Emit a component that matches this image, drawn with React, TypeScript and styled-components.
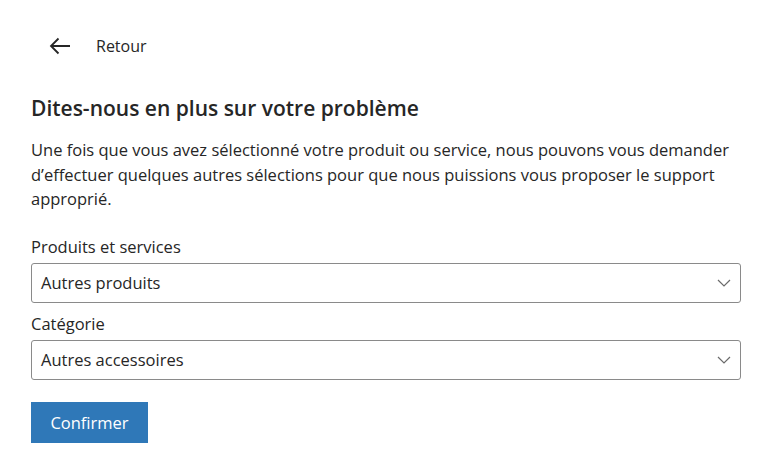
import React from 'react';
import styled, { createGlobalStyle } from 'styled-components';

const GlobalStyle = createGlobalStyle`
  body {
    margin: 0;
    background: #ffffff;
    font-family: "Open Sans", "Noto Sans", sans-serif;
    color: #262626;
  }
`;

const App: React.FC = () => {
  return (
    <>
      <GlobalStyle />
      <Page>
        <BackRow>
          <BackButton aria-label="Retour">
            <svg width="22" height="18" viewBox="0 0 22 18" fill="none">
              <path d="M21 9H2M9.5 1.5L2 9l7.5 7.5" stroke="#262626" strokeWidth="1.8" />
            </svg>
          </BackButton>
          <BackLabel>Retour</BackLabel>
        </BackRow>

        <Title>Dites-nous en plus sur votre problème</Title>
        <Intro>
          Une fois que vous avez sélectionné votre produit ou service, nous pouvons vous demander
          d’effectuer quelques autres sélections pour que nous puissions vous proposer le support
          approprié.
        </Intro>

        <Field>
          <Label>Produits et services</Label>
          <Select>
            <span>Autres produits</span>
            <Chevron />
          </Select>
        </Field>

        <Field>
          <Label>Catégorie</Label>
          <Select>
            <span>Autres accessoires</span>
            <Chevron />
          </Select>
        </Field>

        <PrimaryButton>Confirmer</PrimaryButton>
      </Page>
    </>
  );
};

const Chevron: React.FC = () => (
  <svg width="14" height="8" viewBox="0 0 14 8" fill="none">
    <path d="M1 1l6 6 6-6" stroke="#6b6b6b" strokeWidth="1.2" />
  </svg>
);

const Page = styled.div`
  width: 710px;
  padding: 28px 0 0 31px;
  display: flex;
  flex-direction: column;
`;

const BackRow = styled.div`
  display: flex;
  align-items: center;
  height: 36px;
  margin-bottom: 30px;
`;

const BackButton = styled.div`
  width: 44px;
  display: flex;
  justify-content: center;
  margin-left: 7px;
`;

const BackLabel = styled.span`
  font-size: 16px;
  margin-left: 14px;
`;

const Title = styled.h2`
  margin: 0 0 16px;
  font-size: 21px;
  font-weight: 600;
  line-height: 28px;
`;

const Intro = styled.p`
  margin: 0 0 23px;
  font-size: 16.5px;
  line-height: 24.5px;
`;

const Field = styled.div`
  display: flex;
  flex-direction: column;
  margin-bottom: 9px;
`;

const Label = styled.label`
  font-size: 16.5px;
  line-height: 24px;
  margin-bottom: 4px;
`;

const Select = styled.div`
  height: 40px;
  box-sizing: border-box;
  border: 1px solid #8a8a8a;
  border-radius: 3px;
  display: flex;
  align-items: center;
  justify-content: space-between;
  padding: 0 9px 0 9px;
  font-size: 16.5px;
`;

const PrimaryButton = styled.button`
  align-self: flex-start;
  margin-top: 13px;
  width: 117px;
  height: 41px;
  border: none;
  background: #2f78b8;
  color: #ffffff;
  font-family: inherit;
  font-size: 16.5px;
`;

export default App;
